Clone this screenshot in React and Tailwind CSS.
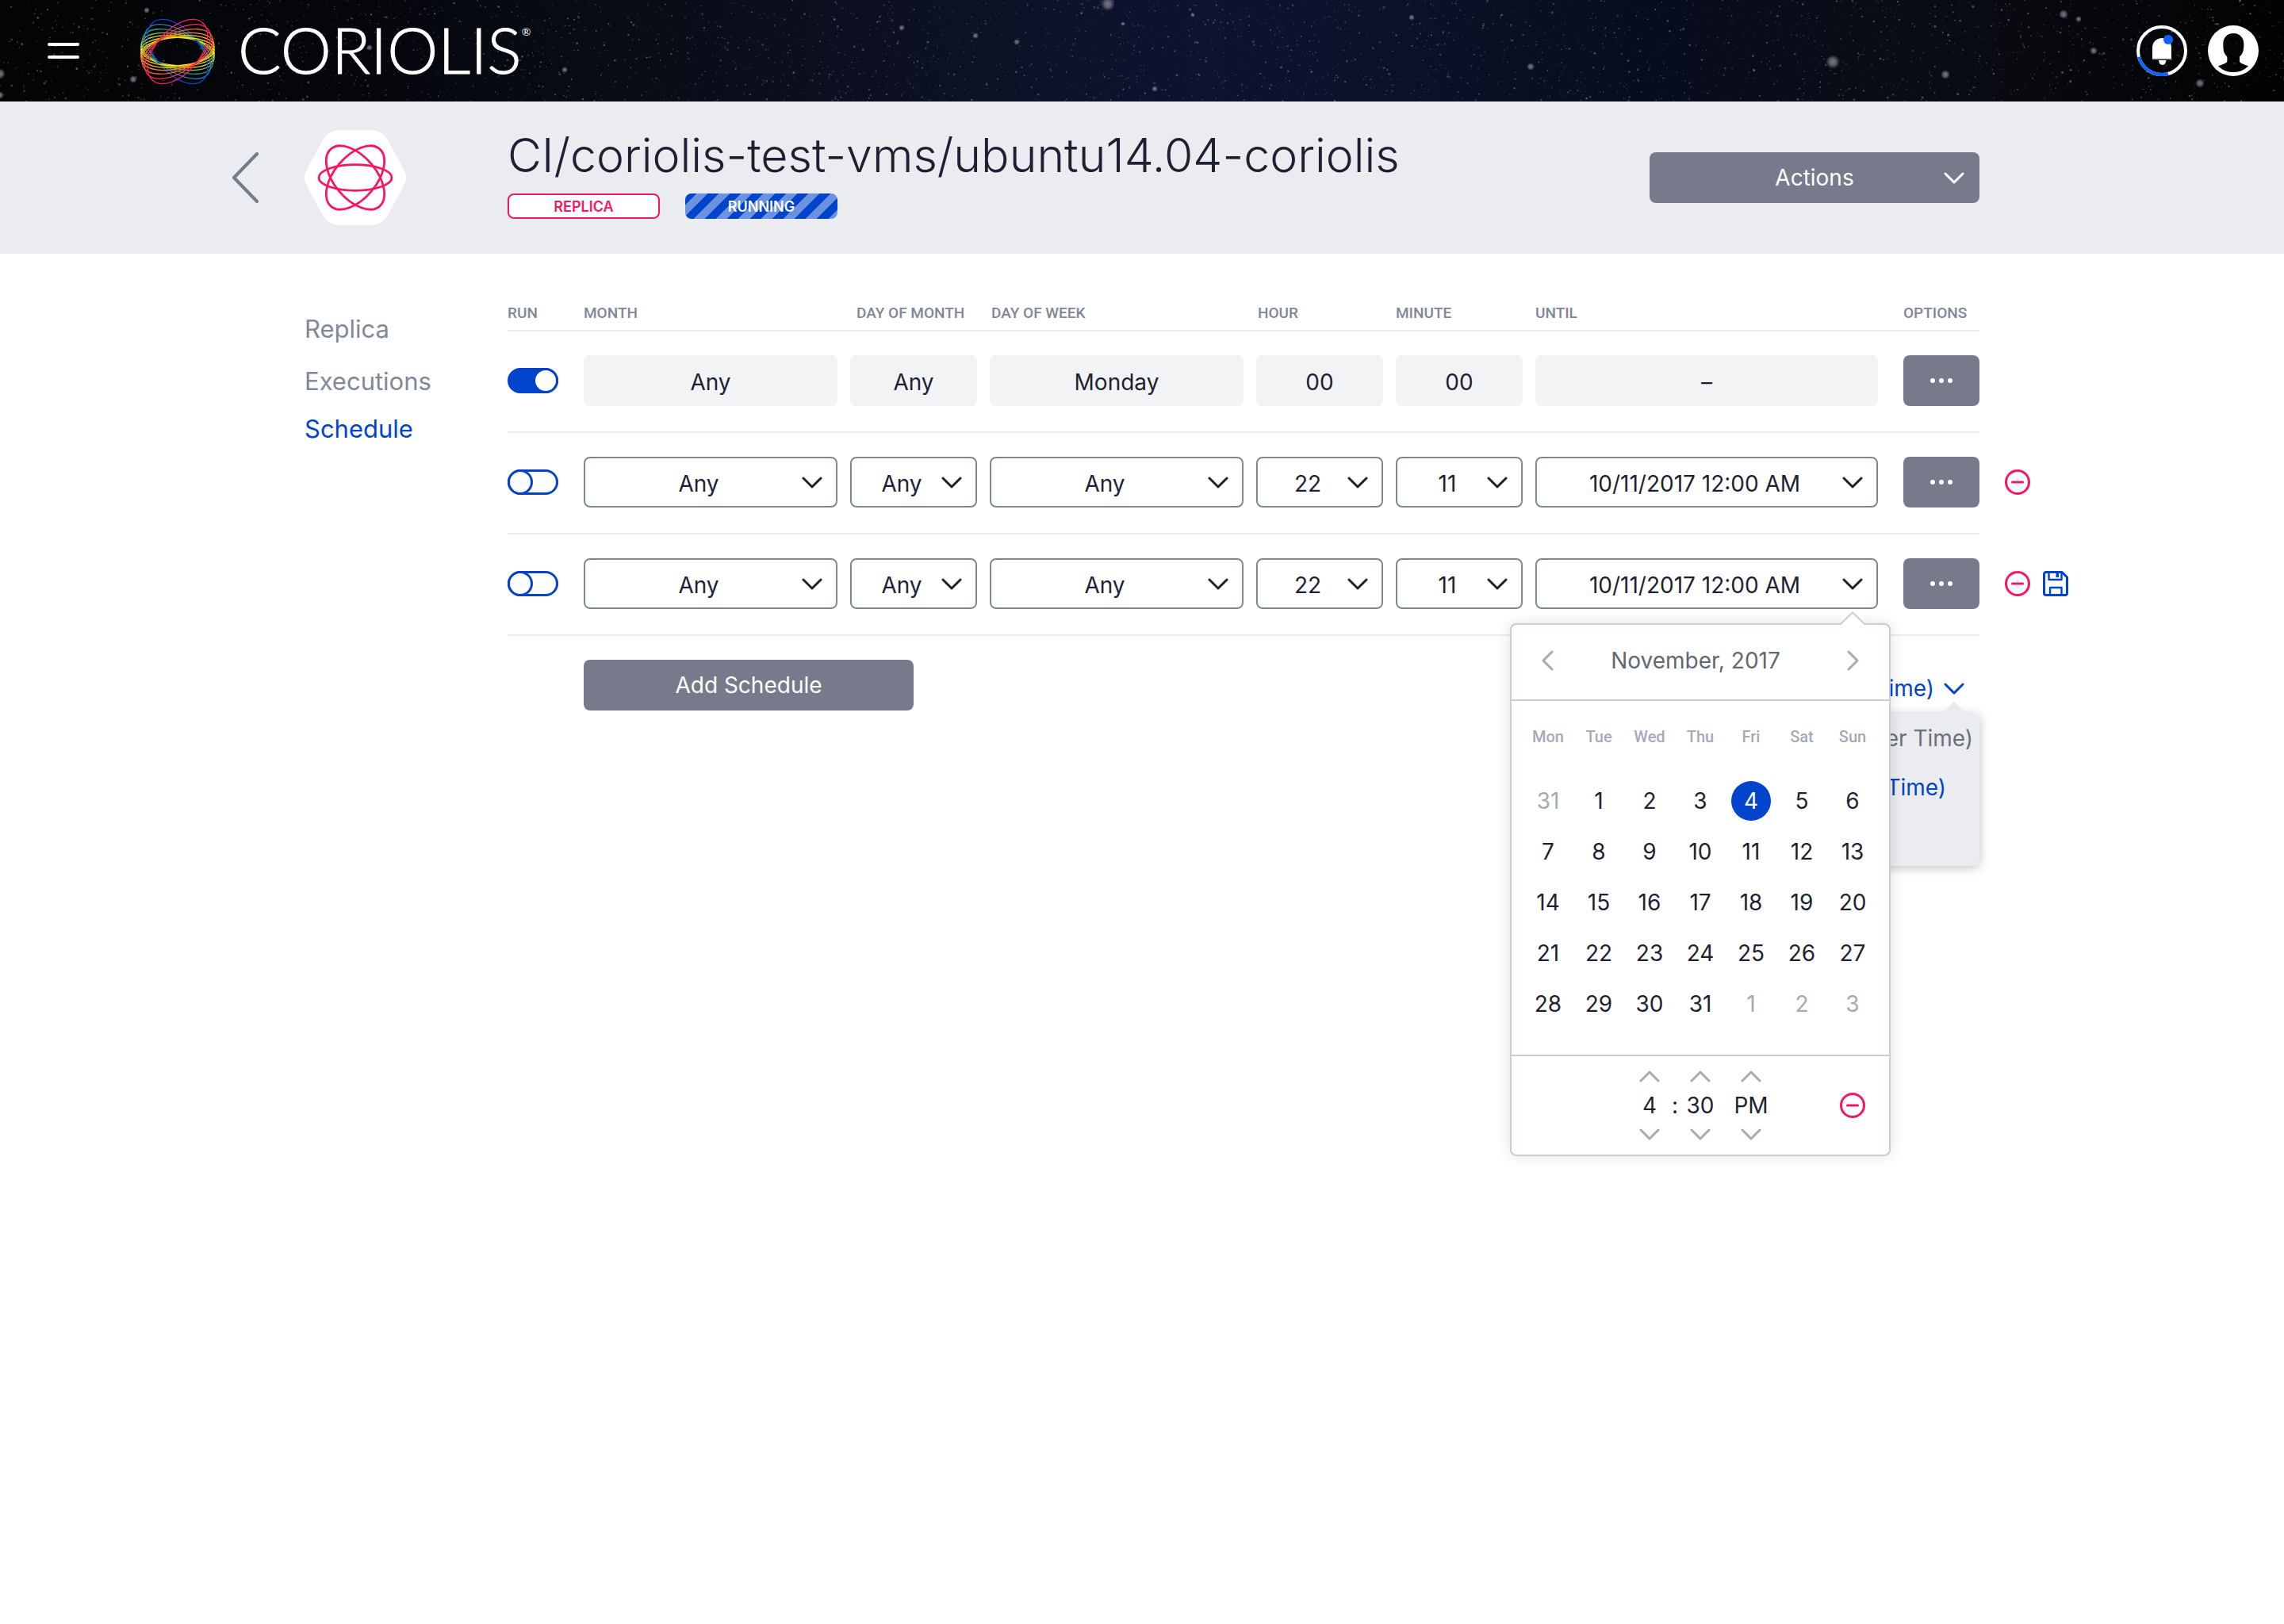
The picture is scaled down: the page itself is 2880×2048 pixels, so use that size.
import React from "react";

const BLUE = "#0044CB";
const PINK = "#F91661";

function makeStars(count) {
  let seed = 1337;
  const next = () => {
    seed = (seed * 16807) % 2147483647;
    return seed / 2147483647;
  };
  return Array.from({ length: count }, () => ({
    x: Math.round(next() * 28800) / 10,
    y: Math.round(next() * 1280) / 10,
    r: 0.5 + Math.round(next() * next() * 11) / 10,
    o: 0.2 + Math.round(next() * 28) / 100,
  }));
}

const STARS = makeStars(2900);

const BRIGHT = [
  [1397, 5, 9], [1137, 35, 4], [1230, 45, 4], [1282, 53, 4], [1504, 19, 3], [1416, 30, 3], [1456, 112, 4],
  [2311, 78, 9], [2453, 94, 6], [2602, 18, 6], [2621, 24, 4], [2640, 64, 5], [2774, 105, 6],
  [0, 93, 7], [0, 120, 5], [168, 100, 5], [185, 13, 4], [466, 60, 4], [712, 88, 4], [1780, 22, 4], [1930, 84, 5],
];

function StarField() {
  return (
    <svg className="absolute inset-0 h-full w-full" viewBox="0 0 2880 128" preserveAspectRatio="xMidYMid slice" aria-hidden="true">
      <defs>
        <linearGradient id="sky" x1="0" x2="1" y1="0" y2="0">
          <stop offset="0" stopColor="#040405" />
          <stop offset="0.14" stopColor="#05060b" />
          <stop offset="0.33" stopColor="#0b0e1b" />
          <stop offset="0.53" stopColor="#0e1430" />
          <stop offset="0.72" stopColor="#080d1e" />
          <stop offset="0.85" stopColor="#0a0c14" />
          <stop offset="1" stopColor="#020202" />
        </linearGradient>
        <radialGradient id="glow">
          <stop offset="0" stopColor="#777886" />
          <stop offset="0.5" stopColor="#6a6b7a" stopOpacity="0.8" />
          <stop offset="1" stopColor="#555870" stopOpacity="0" />
        </radialGradient>
      </defs>
      <rect width="2880" height="128" fill="url(#sky)" />
      {STARS.map((s, i) => (
        <circle key={i} cx={s.x} cy={s.y} r={s.r} fill="#a3a5b5" opacity={s.o} />
      ))}
      {BRIGHT.map(([x, y, r]) => (
        <circle key={`${x}-${y}`} cx={x} cy={y} r={r} fill="url(#glow)" />
      ))}
    </svg>
  );
}

const RINGS = [
  [3, 47, 18.3, "#f7e11b", "#f7e11b"],
  [8.6, 47.3, 20, "#d3dc2b", "#fbb81f"],
  [14, 47.6, 22, "#8cc252", "#f98f2b"],
  [23, 48, 24, "#1d9c86", "#fb5f35"],
  [35, 48.3, 26, "#2c7cb8", "#fb2f50"],
  [49, 48.8, 28.2, "#0b46c8", "#f91b62"],
];

function LogoMark() {
  return (
    <svg className="h-[94px] w-[100px]" viewBox="0 0 100 94" fill="none" strokeWidth="1.3" aria-hidden="true">
      {RINGS.map(([a, rx, ry, cool]) => (
        <ellipse key={`c${a}`} cx="50" cy="48" rx={rx - 0.7} ry={ry - 0.7} stroke={cool} transform={`rotate(${a} 50 48)`} />
      ))}
      {RINGS.map(([a, rx, ry, , warm]) => (
        <ellipse key={`w${a}`} cx="50" cy="48" rx={rx - 0.7} ry={ry - 0.7} stroke={warm} transform={`rotate(${-a} 50 48)`} />
      ))}
    </svg>
  );
}

function Chevron({ dir = "down", className = "", stroke = 3 }) {
  const vertical = dir === "down" || dir === "up";
  const d = {
    down: "M2 2 L13 13 L24 2",
    up: "M2 13 L13 2 L24 13",
    left: "M13 2 L2 13 L13 24",
    right: "M2 2 L13 13 L2 24",
  }[dir];
  return (
    <svg
      className={`${vertical ? "h-[15px] w-[26px]" : "h-[26px] w-[15px]"} ${className}`}
      viewBox={vertical ? "0 0 26 15" : "0 0 15 26"}
      fill="none"
      stroke="currentColor"
      strokeWidth={stroke}
      strokeLinecap="round"
      strokeLinejoin="round"
      aria-hidden="true"
    >
      <path d={d} />
    </svg>
  );
}

function MinusCircle() {
  return (
    <svg className="size-8" viewBox="0 0 32 32" fill="none" stroke={PINK} strokeWidth="3" strokeLinecap="round" aria-hidden="true">
      <circle cx="16" cy="16" r="14.5" />
      <path d="M9.5 16 H22.5" />
    </svg>
  );
}

function SaveIcon() {
  return (
    <svg className="size-8" viewBox="0 0 32 32" fill="none" stroke={BLUE} strokeWidth="3" strokeLinejoin="round" aria-hidden="true">
      <path d="M4 1.5 H24 L30.5 8 V28 A2.5 2.5 0 0 1 28 30.5 H4 A2.5 2.5 0 0 1 1.5 28 V4 A2.5 2.5 0 0 1 4 1.5 Z" />
      <path d="M7.5 2 V11 H23.5 V2" strokeWidth="2.4" />
      <path d="M9 30 V21 H23.5 V30" strokeWidth="2.4" />
      <rect x="16.5" y="1" width="3.5" height="7" fill={BLUE} stroke="none" />
    </svg>
  );
}

function TopBar() {
  return (
    <header className="relative h-32 overflow-hidden bg-[#05060b]">
      <StarField />
      <div className="relative flex h-full items-center px-8">
        <button type="button" aria-label="Menu" className="ml-7 flex flex-col gap-3">
          <span className="h-1 w-10 rounded-full bg-white" />
          <span className="h-1 w-10 rounded-full bg-white" />
        </button>
        <a href="#home" className="ml-[74px] flex items-center text-white">
          <LogoMark />
          <span className="ml-[26px] pb-1 font-[Lato,sans-serif] text-[81px] leading-[92px] font-light [-webkit-text-stroke:1px_white]">CORIOLIS</span>
          <span className="mb-12 font-[Lato,sans-serif] text-[14px] leading-4">®</span>
        </a>
        <div className="ml-auto flex items-center gap-[26px]">
          <button type="button" aria-label="Notifications">
            <svg className="size-16" viewBox="0 0 64 64" fill="none" aria-hidden="true">
              <circle cx="32" cy="32" r="30" stroke="#fff" strokeWidth="4" />
              <path d="M3 39.8 A30 30 0 0 0 39.8 61" stroke="#0f62ff" strokeWidth="4" />
              <path d="M20 42 V28 A12 12 0 0 1 44 28 V42 Z" fill="#fff" />
              <path d="M20 42.8 H44" stroke="#8a8b93" strokeWidth="1.2" />
              <path d="M28 44 H37.4 A4.7 6 0 0 1 28 44 Z" fill="#fff" />
              <circle cx="40" cy="18" r="6" fill="#0f62ff" />
            </svg>
          </button>
          <button type="button" aria-label="Account">
            <svg className="size-16" viewBox="0 0 64 64" fill="#fff" fillRule="evenodd" aria-hidden="true">
              <path d="M32 0 A32 32 0 1 0 32 64 A32 32 0 1 0 32 0 Z M32.3 10 C24 10 19.3 16 19.3 23 C19.3 31 20 36 24.3 39.5 V46 C22 48.5 17 49.5 13 51.5 A27.5 27.5 0 0 0 51 51.5 C47 49.5 42 48.5 40 46 V39.5 C44.5 36 45.3 31 45.3 23 C45.3 16 40.5 10 32.3 10 Z" />
            </svg>
          </button>
        </div>
      </div>
    </header>
  );
}

function ReplicaMark() {
  return (
    <svg className="size-32" viewBox="0 0 128 128" aria-hidden="true">
      <path
        d="M46 4 H82 Q97 4 104 15 L124 52 Q132 64 124 76 L104 113 Q97 124 82 124 H46 Q31 124 24 113 L4 76 Q-4 64 4 52 L24 15 Q31 4 46 4 Z"
        fill="#fff"
      />
      <g fill="none" stroke={PINK} strokeWidth="2.8">
        <ellipse cx="64" cy="64" rx="46" ry="16.3" />
        <ellipse cx="64" cy="64" rx="47.4" ry="26.6" transform="rotate(50 64 64)" />
        <ellipse cx="64" cy="64" rx="47.4" ry="26.6" transform="rotate(-50 64 64)" />
      </g>
    </svg>
  );
}

function TitleBand() {
  return (
    <section className="bg-[#EBECF0] py-8">
      <div className="mx-auto grid max-w-[2336px] grid-cols-[112px_256px_minmax(0,1fr)_416px] items-center pr-28">
        <a href="#replicas" aria-label="Back" className="pl-5 text-[#777A8B]">
          <svg className="h-16 w-9" viewBox="0 0 36 64" fill="none" stroke="currentColor" strokeWidth="4" strokeLinecap="round" strokeLinejoin="round" aria-hidden="true">
            <path d="M32 2 L3 32 L32 62" />
          </svg>
        </a>
        <ReplicaMark />
        <div className="self-start">
          <h1 className="text-[59px] leading-[72px] font-light text-[#1F1F33]">CI/coriolis-test-vms/ubuntu14.04-coriolis</h1>
          <div className="mt-3 flex gap-8">
            <span className="flex h-8 w-48 items-center justify-center rounded-lg border-2 border-[#F91661] bg-white text-[18px] font-semibold text-[#F91661]">
              REPLICA
            </span>
            <span className="flex h-8 w-48 items-center justify-center rounded-lg bg-[repeating-linear-gradient(135deg,#0044CB_0px,#0044CB_10px,#6A92E0_10px,#6A92E0_20px)] text-[18px] font-semibold text-white">
              RUNNING
            </span>
          </div>
        </div>
        <button type="button" className="grid h-16 items-center rounded-lg bg-[#777A8B] text-[28px] text-white">
          <span className="col-start-1 row-start-1 text-center">Actions</span>
          <Chevron className="col-start-1 row-start-1 mr-[19px] justify-self-end" />
        </button>
      </div>
    </section>
  );
}

function SideNav() {
  return (
    <nav className="flex flex-col items-start pt-[75px] text-[31px] leading-10 text-[#828997]">
      <a href="#replica">Replica</a>
      <a href="#executions" className="mt-[26px]">Executions</a>
      <a href="#schedule" className="mt-5 text-[#0044CB]" aria-current="page">Schedule</a>
    </nav>
  );
}

function PickList({ label, value }) {
  return (
    <div className="grid items-center text-[#1F1F33]">
      <select
        aria-label={label}
        defaultValue={value}
        className="col-start-1 row-start-1 h-16 w-full appearance-none rounded-lg border-2 border-[#7F8795] bg-white pt-1 pr-[30px] text-center text-[28px]"
      >
        <option>{value}</option>
      </select>
      <Chevron className="pointer-events-none col-start-1 row-start-1 mr-[19px] justify-self-end" />
    </div>
  );
}

function Fixed({ children }) {
  return <div className="flex h-16 items-center justify-center rounded-lg bg-[#F2F3F5] pt-1 text-[28px] text-[#1F1F33]">{children}</div>;
}

const WEEK = ["Mon", "Tue", "Wed", "Thu", "Fri", "Sat", "Sun"];
const DAYS = [
  [31, 1, 2, 3, 4, 5, 6],
  [7, 8, 9, 10, 11, 12, 13],
  [14, 15, 16, 17, 18, 19, 20],
  [21, 22, 23, 24, 25, 26, 27],
  [28, 29, 30, 31, 1, 2, 3],
];

function Stepper({ name, value }) {
  return (
    <div className="flex w-16 flex-col items-center">
      <button type="button" aria-label={`${name} up`} className="flex text-[#A4AAB8]">
        <Chevron dir="up" />
      </button>
      <span className="my-[9px] leading-10">{value}</span>
      <button type="button" aria-label={`${name} down`} className="flex text-[#A4AAB8]">
        <Chevron dir="down" />
      </button>
    </div>
  );
}

function DatePicker() {
  return (
    <div
      role="dialog"
      aria-label="Choose date"
      className="absolute top-full -right-4 z-20 mt-[18px] w-[480px] rounded-lg border-2 border-[#C8CCD7] bg-white text-[28px] text-[#1F1F33] shadow-[0_0_18px_rgba(0,0,0,0.12)]"
    >
      <svg className="absolute -top-[17px] right-[30px] h-[18px] w-8" viewBox="0 0 32 18" aria-hidden="true">
        <path d="M0 18 L16 1 L32 18 Z" fill="#fff" />
        <path d="M0 16.5 L16 1.5 L32 16.5" fill="none" stroke="#C8CCD7" strokeWidth="2" />
      </svg>
      <div className="flex h-24 items-center justify-between border-b-2 border-[#C8CCD7] px-[38px] pb-1">
        <button type="button" aria-label="Previous month" className="flex text-[#A4AAB8]">
          <Chevron dir="left" />
        </button>
        <span className="mr-3 text-[#616770]">November, 2017</span>
        <button type="button" aria-label="Next month" className="flex text-[#A4AAB8]">
          <Chevron dir="right" />
        </button>
      </div>
      <div className="px-[14px] pb-8">
        <table className="w-full table-fixed border-collapse text-center">
          <thead>
            <tr className="h-[94px] text-[20px] text-[#A4AAB8]">
              {WEEK.map((d) => (
                <th key={d} scope="col" className="p-0 pb-1 font-[Roboto,sans-serif] font-medium">
                  {d}
                </th>
              ))}
            </tr>
          </thead>
          <tbody>
            {DAYS.map((week, r) => (
              <tr key={r} className="h-16">
                {week.map((day, c) => {
                  const outside = (r === 0 && c === 0) || (r === 4 && c > 3);
                  const selected = r === 0 && c === 4;
                  const tone = outside ? "text-[#A4AAB8]" : selected ? "bg-[#0044CB] text-white" : "";
                  return (
                    <td key={c} className="p-0">
                      <button type="button" className={`mx-auto flex size-[50px] items-center justify-center rounded-full ${tone}`}>
                        {day}
                      </button>
                    </td>
                  );
                })}
              </tr>
            ))}
          </tbody>
        </table>
      </div>
      <div className="flex h-[126px] items-center border-t-2 border-[#C8CCD7] pr-[30px] pl-[142px]">
        <Stepper name="Hour" value="4" />
        <span className="-mx-2 w-4 text-center">:</span>
        <Stepper name="Minute" value="30" />
        <Stepper name="Period" value="PM" />
        <button type="button" aria-label="Clear date" className="ml-auto">
          <MinusCircle />
        </button>
      </div>
    </div>
  );
}

function UntilPicker({ value, open }) {
  return (
    <div className="relative">
      <button
        type="button"
        aria-expanded={open}
        aria-label={`Until ${value}`}
        className="grid h-16 w-full items-center rounded-lg border-2 border-[#7F8795] bg-white text-[28px] text-[#1F1F33]"
      >
        <span className="col-start-1 row-start-1 pt-1 pr-[30px] text-center">{value}</span>
        <Chevron className="col-start-1 row-start-1 mr-[17px] justify-self-end" />
      </button>
      {open && <DatePicker />}
    </div>
  );
}

const ROWS = [
  { on: true, fixed: true, month: "Any", day: "Any", week: "Monday", hour: "00", minute: "00", until: "–" },
  { month: "Any", day: "Any", week: "Any", hour: "22", minute: "11", until: "10/11/2017 12:00 AM" },
  { month: "Any", day: "Any", week: "Any", hour: "22", minute: "11", until: "10/11/2017 12:00 AM", open: true, unsaved: true },
];

const HEADS = [
  ["RUN", ""],
  ["MONTH", ""],
  ["DAY OF MONTH", "pl-2"],
  ["DAY OF WEEK", "pl-0.5"],
  ["HOUR", "pl-0.5"],
  ["MINUTE", ""],
  ["UNTIL", ""],
  ["OPTIONS", ""],
];

const CELL = "border-b-2 border-[#EBECF0] p-0 pt-[30px] pb-8 align-top";

function ScheduleRow({ row, index }) {
  const fields = [
    ["Month", row.month],
    ["Day of month", row.day],
    ["Day of week", row.week],
    ["Hour", row.hour],
    ["Minute", row.minute],
  ];
  return (
    <tr>
      <td className={CELL}>
        <div className="flex h-16 items-center">
          <input
            type="checkbox"
            aria-label={`Run schedule ${index + 1}`}
            defaultChecked={Boolean(row.on)}
            className="block h-8 w-16 appearance-none rounded-full border-[3px] border-[#0044CB] bg-white before:-m-[3px] before:block before:size-8 before:rounded-full before:border-[3px] before:border-[#0044CB] before:bg-white checked:bg-[#0044CB] checked:before:ml-[29px]"
          />
        </div>
      </td>
      {fields.map(([label, value]) => (
        <td key={label} className={`${CELL} pr-4`}>
          {row.fixed ? <Fixed>{value}</Fixed> : <PickList label={label} value={value} />}
        </td>
      ))}
      <td className={`${CELL} pr-8`}>{row.fixed ? <Fixed>{row.until}</Fixed> : <UntilPicker value={row.until} open={Boolean(row.open)} />}</td>
      <td className={CELL}>
        <button type="button" aria-label="Options" className="flex h-16 w-24 items-center justify-center gap-[5px] rounded-lg bg-[#777A8B]">
          <span className="size-1.5 rounded-full bg-white" />
          <span className="size-1.5 rounded-full bg-white" />
          <span className="size-1.5 rounded-full bg-white" />
        </button>
      </td>
      <td className="p-0 pt-[30px] align-top">
        <div className="flex h-16 items-center gap-4 pl-8">
          {!row.fixed && (
            <button type="button" aria-label="Remove schedule">
              <MinusCircle />
            </button>
          )}
          {row.unsaved && (
            <button type="button" aria-label="Save schedule">
              <SaveIcon />
            </button>
          )}
        </div>
      </td>
    </tr>
  );
}

function TimezonePicker() {
  return (
    <div className="relative">
      <button type="button" className="flex h-16 items-center gap-3 pt-2 pr-[19px] text-[28px] text-[#0044CB]">
        Time)
        <Chevron />
      </button>
      <div className="absolute top-full right-0 z-10 mt-1 w-[224px] rounded-lg bg-[#EBECF0] pb-2 text-[28px] whitespace-nowrap shadow-[0_2px_14px_rgba(0,0,0,0.25)]">
        <svg className="absolute -top-4 right-4 h-[17px] w-8" viewBox="0 0 32 17" aria-hidden="true">
          <path d="M0 17 L16 0 L32 17 Z" fill="#EBECF0" />
        </svg>
        <ul>
          <li className="pr-2 text-right leading-[62px] text-[#6B7079]">er Time)</li>
          <li className="pr-[42px] text-right leading-[62px] text-[#0044CB]">Time)</li>
          <li className="h-[60px]" />
        </ul>
      </div>
    </div>
  );
}

function Schedule() {
  return (
    <section className="min-w-0">
      <table className="w-full table-fixed border-separate border-spacing-0 text-left">
        <colgroup>
          <col className="w-24" />
          <col className="w-[336px]" />
          <col className="w-44" />
          <col className="w-[336px]" />
          <col className="w-44" />
          <col className="w-44" />
          <col />
          <col className="w-24" />
          <col className="w-28" />
        </colgroup>
        <thead>
          <tr className="h-[98px] font-[Roboto,sans-serif] text-[19px] leading-[26px] whitespace-nowrap text-[#7F8795]">
            {HEADS.map(([text, pad]) => (
              <th key={text} scope="col" className={`border-b-2 border-[#EBECF0] p-0 pb-2 align-bottom font-medium ${pad}`}>
                {text}
              </th>
            ))}
            <td />
          </tr>
        </thead>
        <tbody>
          {ROWS.map((row, i) => (
            <ScheduleRow key={i} row={row} index={i} />
          ))}
        </tbody>
      </table>
      <div className="mt-[30px] flex justify-between pr-28 pl-24">
        <button type="button" className="h-16 w-[416px] rounded-lg bg-[#777A8B] text-[28px] text-white">
          Add Schedule
        </button>
        <TimezonePicker />
      </div>
    </section>
  );
}

export default function App() {
  return (
    <div className="min-h-screen bg-white font-[Inter,sans-serif]">
      <TopBar />
      <TitleBand />
      <main className="mx-auto grid max-w-[2336px] grid-cols-[256px_minmax(0,1fr)] pl-28">
        <SideNav />
        <Schedule />
      </main>
    </div>
  );
}
